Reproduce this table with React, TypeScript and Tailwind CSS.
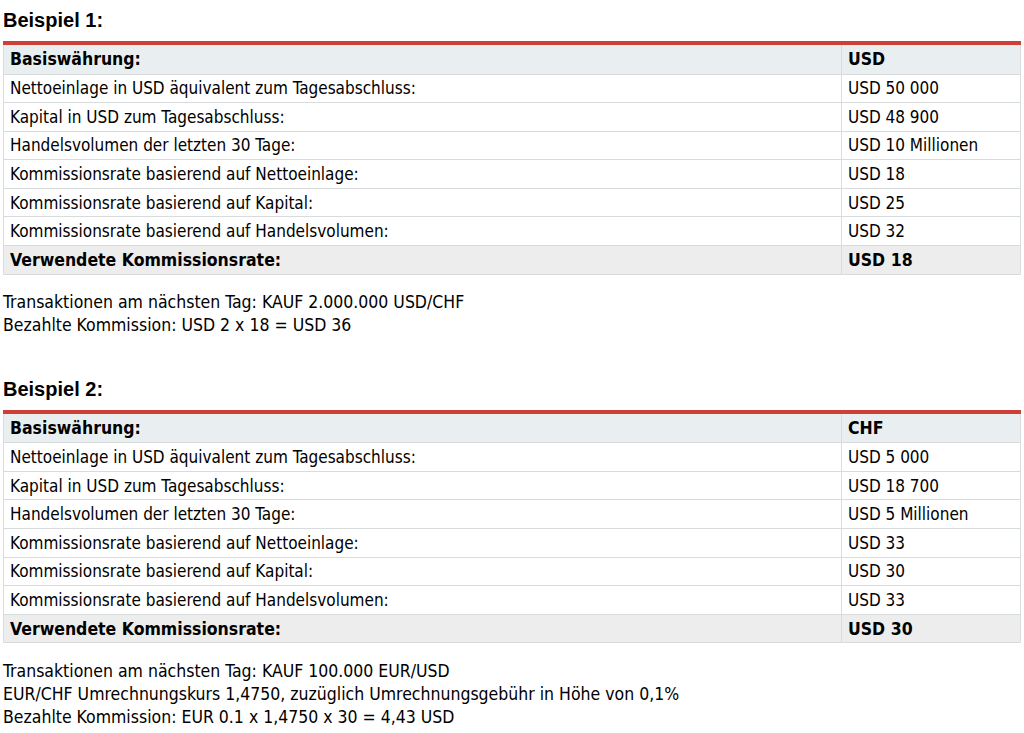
const examples = [
  {
    title: 'Beispiel 1:',
    base: 'USD',
    rows: [
      ['Nettoeinlage in USD äquivalent zum Tagesabschluss:', 'USD 50 000'],
      ['Kapital in USD zum Tagesabschluss:', 'USD 48 900'],
      ['Handelsvolumen der letzten 30 Tage:', 'USD 10 Millionen'],
      ['Kommissionsrate basierend auf Nettoeinlage:', 'USD 18'],
      ['Kommissionsrate basierend auf Kapital:', 'USD 25'],
      ['Kommissionsrate basierend auf Handelsvolumen:', 'USD 32'],
    ],
    used: 'USD 18',
    notes: ['Transaktionen am nächsten Tag: KAUF 2.000.000 USD/CHF', 'Bezahlte Kommission: USD 2 x 18 = USD 36'],
  },
  {
    title: 'Beispiel 2:',
    base: 'CHF',
    rows: [
      ['Nettoeinlage in USD äquivalent zum Tagesabschluss:', 'USD 5 000'],
      ['Kapital in USD zum Tagesabschluss:', 'USD 18 700'],
      ['Handelsvolumen der letzten 30 Tage:', 'USD 5 Millionen'],
      ['Kommissionsrate basierend auf Nettoeinlage:', 'USD 33'],
      ['Kommissionsrate basierend auf Kapital:', 'USD 30'],
      ['Kommissionsrate basierend auf Handelsvolumen:', 'USD 33'],
    ],
    used: 'USD 30',
    notes: [
      'Transaktionen am nächsten Tag: KAUF 100.000 EUR/USD',
      'EUR/CHF Umrechnungskurs 1,4750, zuzüglich Umrechnungsgebühr in Höhe von 0,1%',
      'Bezahlte Kommission: EUR 0.1 x 1,4750 x 30 = 4,43 USD',
    ],
  },
];

const body = "font-['DejaVu_Sans_Condensed','DejaVu_Sans',sans-serif]";

const App = () => {
  return (
    <div className={`bg-white w-[1024px] h-[733px] overflow-hidden px-[3px] text-black ${body}`}>
      {examples.map((ex, i) => (
        <section key={ex.title} className={i === 0 ? 'pt-[9px]' : 'pt-[41px]'}>
          <h2 className="font-['Liberation_Sans',Arial,sans-serif] font-bold text-[20px] leading-[22px] mb-[10px]">
            {ex.title}
          </h2>

          <table className="w-[1018px] border-collapse border-t-[4px] border-t-[#cf3f38] text-[17px] leading-[20px]">
            <tbody>
              <tr className="bg-[#e9eff0] font-bold text-[17.5px]">
                <td className="border border-[#d9dcdc] border-t-0 h-[31px] px-[6px]">Basiswährung:</td>
                <td className="border border-[#d9dcdc] border-t-0 h-[31px] px-[6px] w-[179px]">{ex.base}</td>
              </tr>
              {ex.rows.map(([label, value]) => (
                <tr key={label}>
                  <td className="border border-[#d9dcdc] h-[28.6px] px-[6px]">{label}</td>
                  <td className="border border-[#d9dcdc] h-[28.6px] px-[6px]">{value}</td>
                </tr>
              ))}
              <tr className="bg-[#ededed] font-bold text-[17.5px]">
                <td className="border border-[#d9dcdc] h-[28.6px] px-[6px]">Verwendete Kommissionsrate:</td>
                <td className="border border-[#d9dcdc] h-[28.6px] px-[6px]">{ex.used}</td>
              </tr>
            </tbody>
          </table>

          <div className={`mt-[16px] text-[17.5px] leading-[23px] ${i === 1 ? 'pt-[1px]' : ''}`}>
            {ex.notes.map((n) => (
              <p key={n}>{n}</p>
            ))}
          </div>
        </section>
      ))}
    </div>
  );
};

export default App;
